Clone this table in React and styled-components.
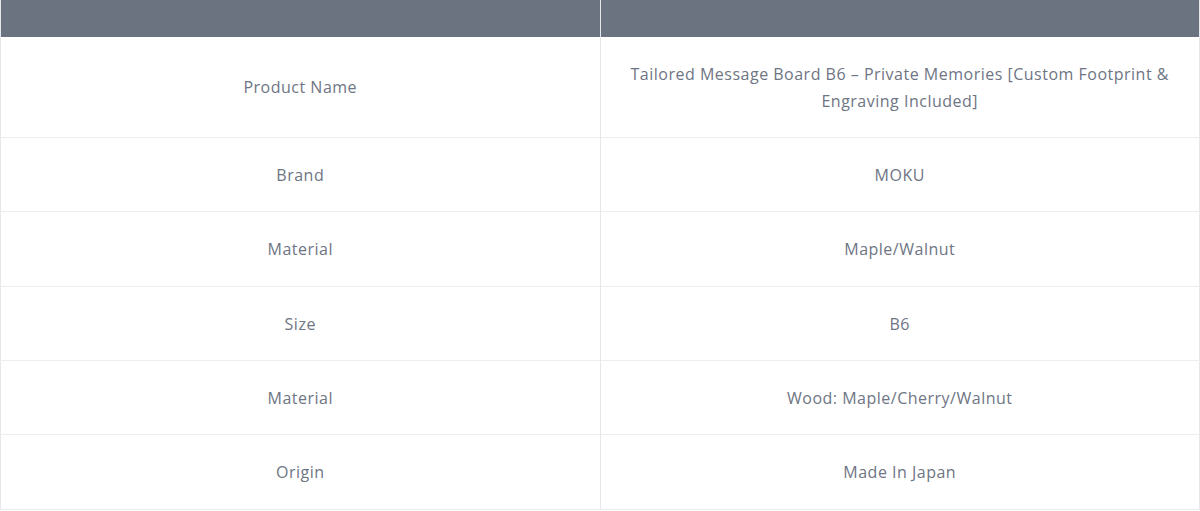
import React from 'react';
import styled, { createGlobalStyle } from 'styled-components';

const GlobalStyle = createGlobalStyle`
  body {
    margin: 0;
    background: #ffffff;
    font-family: "Open Sans", "Noto Sans", "Noto Sans CJK KR", sans-serif;
  }
`;

const SpecTable = styled.table`
  width: 100%;
  border-collapse: collapse;
  table-layout: fixed;
  border: 1px solid #e5e7eb;
  border-top: none;
`;

const HeadRow = styled.tr`
  background: #6b7280;
  height: 36.5px;
`;

const HeadCell = styled.th`
  padding: 0;
  border-left: 1px solid #e5e7eb;
  &:first-child {
    border-left: none;
  }
`;

const BodyRow = styled.tr`
  border-bottom: 1px solid #eeeeee;
`;

const Cell = styled.td`
  padding: 24px 28px 22.4px;
  text-align: center;
  vertical-align: middle;
  font-size: 16px;
  line-height: 27px;
  letter-spacing: 0.5px;
  color: #6e7584;
  border-left: ${({ $divider }) => ($divider ? '1px solid #e5e7eb' : 'none')};
`;

const specs = [
  ['Product Name', 'Tailored Message Board B6 – Private Memories [Custom Footprint & Engraving Included]'],
  ['Brand', 'MOKU'],
  ['Material', 'Maple/Walnut'],
  ['Size', 'B6'],
  ['Material', 'Wood: Maple/Cherry/Walnut'],
  ['Origin', 'Made In Japan'],
];

const App = () => {
  return (
    <>
      <GlobalStyle />
      <SpecTable>
        <thead>
          <HeadRow>
            <HeadCell />
            <HeadCell />
          </HeadRow>
        </thead>
        <tbody>
          {specs.map(([label, value], i) => (
            <BodyRow key={i}>
              <Cell>{label}</Cell>
              <Cell $divider>{value}</Cell>
            </BodyRow>
          ))}
        </tbody>
      </SpecTable>
    </>
  );
};

export default App;
